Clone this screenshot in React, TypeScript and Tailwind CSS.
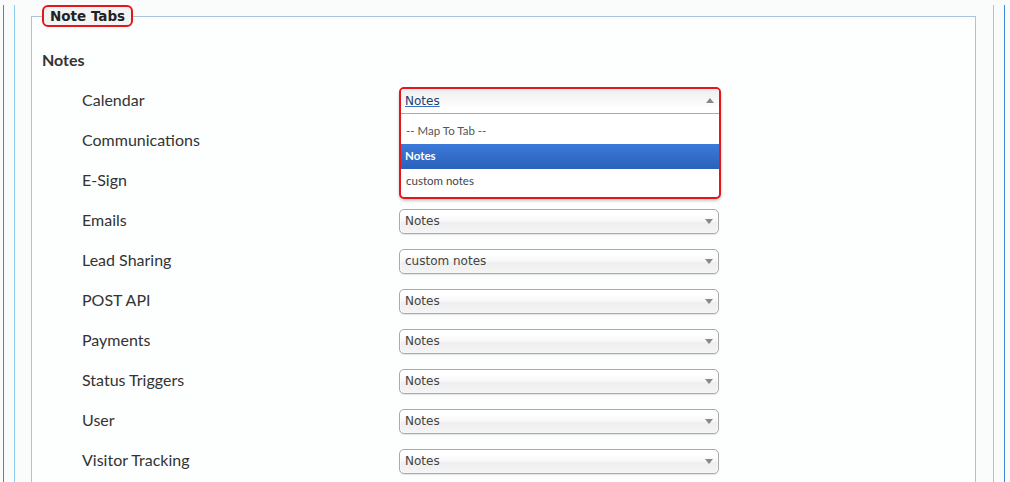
import { ReactElement } from "react";

const rows: { label: string; value: string }[] = [
  { label: "Calendar", value: "Notes" },
  { label: "Communications", value: "Notes" },
  { label: "E-Sign", value: "Notes" },
  { label: "Emails", value: "Notes" },
  { label: "Lead Sharing", value: "custom notes" },
  { label: "POST API", value: "Notes" },
  { label: "Payments", value: "Notes" },
  { label: "Status Triggers", value: "Notes" },
  { label: "User", value: "Notes" },
  { label: "Visitor Tracking", value: "Notes" },
];

function Arrow({ up }: { up?: boolean }): ReactElement {
  return (
    <svg width="8" height="5" viewBox="0 0 8 5" className="shrink-0">
      {up ? (
        <path d="M0 5 L4 0 L8 5 Z" fill="#888" />
      ) : (
        <path d="M0 0 L8 0 L4 5 Z" fill="#888" />
      )}
    </svg>
  );
}

function ClosedSelect({ value }: { value: string }): ReactElement {
  return (
    <div className="w-[320px] h-[25px] flex items-center justify-between pl-[5px] pr-[5px] border border-[#aaa] rounded-[5px] bg-[linear-gradient(#ffffff_20%,#f6f6f6_50%,#eeeeee_52%,#f4f4f4_100%)] shadow-[inset_0_0_3px_#fff,0_1px_1px_rgba(0,0,0,0.1)] text-[12px] text-[#444] font-['DejaVu_Sans',sans-serif]">
      <span>{value}</span>
      <Arrow />
    </div>
  );
}

function OpenSelect(): ReactElement {
  return (
    <div className="absolute left-0 top-0 w-[322px] border-2 border-[#e8141b] rounded-[5px] bg-white overflow-hidden shadow-[0_2px_3px_rgba(0,0,0,0.2)]">
      <div className="h-[25px] flex items-center justify-between pl-[4px] pr-[5px] border-b border-[#aaa] bg-[linear-gradient(#eeeeee_0%,#ffffff_80%)] text-[12px] font-['DejaVu_Sans',sans-serif]">
        <span className="text-[#1b3f74] underline decoration-[#3a6fc2]">Notes</span>
        <Arrow up />
      </div>
      <div className="pt-[5px] pb-[3px] text-[11.5px] font-['Lato',sans-serif]">
        <div className="h-[25px] flex items-center pl-[5px] text-[#555]">-- Map To Tab --</div>
        <div className="h-[25px] flex items-center pl-[4px] text-white font-bold bg-[linear-gradient(#3c79d8,#2a62bc)]">
          Notes
        </div>
        <div className="h-[25px] flex items-center pl-[5px] text-[#444]">custom notes</div>
      </div>
    </div>
  );
}

export default function App(): ReactElement {
  return (
    <div className="h-[482px] overflow-hidden bg-[#fafcfc]">
      <div className="ml-[3px] mr-[5px] h-full border-x border-[#3f8ad6] px-[10px]">
        <div className="h-full border-x border-[#8ccff3]">
          <fieldset className="ml-[16px] mr-[17px] mt-[5px] border border-[#a9c4dc] px-[10px] pb-[20px] bg-[#fdfefe]">
            <legend className="px-[6px] h-[22px] leading-[18px] border-2 border-[#e8141b] rounded-[6px] bg-[#f3f4f4] text-[13.5px] font-bold text-[#222] font-['DejaVu_Sans',sans-serif]">
              Note Tabs
            </legend>
            <div className="mt-[13px] h-[40px] flex items-center text-[16px] font-bold text-[#333] font-['Lato',sans-serif]">
              Notes
            </div>
            <div className="flex flex-col pl-[40px]">
              {rows.map((row, i) => (
                <div key={row.label} className="h-[40px] flex items-center">
                  <div className="w-[317px] text-[16px] leading-[20px] pb-[1px] text-[#333] font-['Lato',sans-serif]">
                    {row.label}
                  </div>
                  <div className="relative pt-[2px]">
                    {i === 0 ? (
                      <>
                        <div className="w-[320px] h-[25px]" />
                        <OpenSelect />
                      </>
                    ) : i === 1 || i === 2 ? (
                      <div className="w-[320px] h-[25px]" />
                    ) : (
                      <ClosedSelect value={row.value} />
                    )}
                  </div>
                </div>
              ))}
            </div>
          </fieldset>
        </div>
      </div>
    </div>
  );
}
